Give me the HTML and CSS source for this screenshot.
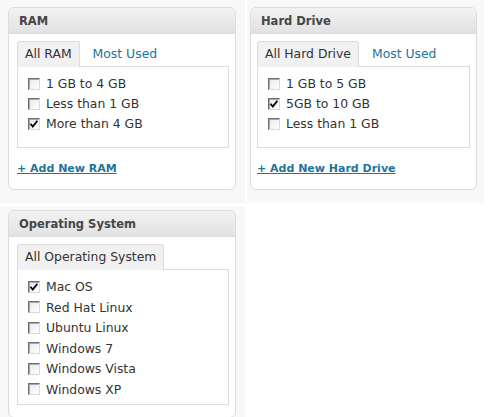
FILE: index.html
```html
<!DOCTYPE html>
<html>
<head>
<meta charset="utf-8">
<link rel="stylesheet" href="styles.css">
</head>
<body>
<div class="grid">
  <div class="cell cell-a">
    <div class="postbox">
      <h3 class="hndle">RAM</h3>
      <div class="inside">
        <ul class="tabs">
          <li class="tab active">All RAM</li>
          <li class="tab"><a href="#">Most Used</a></li>
        </ul>
        <div class="tabbox">
          <ul class="checklist short">
            <li><span class="cb"></span>1 GB to 4 GB</li>
            <li><span class="cb"></span>Less than 1 GB</li>
            <li><span class="cb checked"><svg viewBox="0 0 10 10" width="10" height="10"><path d="M1.5 4.8 L3.8 7.6 L8.4 1.8" fill="none" stroke="#000" stroke-width="1.8"/></svg></span>More than 4 GB</li>
          </ul>
        </div>
        <a class="add" href="#">+ Add New RAM</a>
      </div>
    </div>
  </div>
  <div class="cell cell-b">
    <div class="postbox narrow">
      <h3 class="hndle">Hard Drive</h3>
      <div class="inside">
        <ul class="tabs">
          <li class="tab active">All Hard Drive</li>
          <li class="tab"><a href="#">Most Used</a></li>
        </ul>
        <div class="tabbox">
          <ul class="checklist short">
            <li><span class="cb"></span>1 GB to 5 GB</li>
            <li><span class="cb checked"><svg viewBox="0 0 10 10" width="10" height="10"><path d="M1.5 4.8 L3.8 7.6 L8.4 1.8" fill="none" stroke="#000" stroke-width="1.8"/></svg></span>5GB to 10 GB</li>
            <li><span class="cb"></span>Less than 1 GB</li>
          </ul>
        </div>
        <a class="add" href="#">+ Add New Hard Drive</a>
      </div>
    </div>
  </div>
  <div class="cell cell-c">
    <div class="postbox">
      <h3 class="hndle">Operating System</h3>
      <div class="inside">
        <ul class="tabs">
          <li class="tab active">All Operating System</li>
        </ul>
        <div class="tabbox">
          <ul class="checklist long">
            <li><span class="cb checked"><svg viewBox="0 0 10 10" width="10" height="10"><path d="M1.5 4.8 L3.8 7.6 L8.4 1.8" fill="none" stroke="#000" stroke-width="1.8"/></svg></span>Mac OS</li>
            <li><span class="cb"></span>Red Hat Linux</li>
            <li><span class="cb"></span>Ubuntu Linux</li>
            <li><span class="cb"></span>Windows 7</li>
            <li><span class="cb"></span>Windows Vista</li>
            <li><span class="cb"></span>Windows XP</li>
          </ul>
        </div>
      </div>
    </div>
  </div>
</div>
</body>
</html>
```
FILE: styles.css
```css
html, body {
  margin: 0;
  padding: 0;
  background: #fff;
  font-family: "DejaVu Sans", Verdana, sans-serif;
  color: #333;
}

.grid {
  display: grid;
  grid-template-columns: 245px 237px;
  grid-template-rows: 203px 240px;
  gap: 3px 2px;
  height: 417px;
  overflow: hidden;
}

.cell {
  background: #f8f8f8;
  box-sizing: border-box;
}

.cell-a { padding: 7px 0 0 8px; }
.cell-b { padding: 7px 0 0 3px; }
.cell-c { padding: 4px 0 0 8px; }

.postbox {
  width: 228px;
  box-sizing: border-box;
  background: #fff;
  border: 1px solid #dcdcdc;
  border-radius: 6px;
}

.postbox.narrow { width: 227px; }

.hndle {
  margin: 0;
  height: 25px;
  line-height: 26px;
  padding: 0 10px;
  font-size: 11.5px;
  font-weight: bold;
  color: #464646;
  background: linear-gradient(to bottom, #f2f2f2, #e2e2e2);
  border-bottom: 1px solid #dcdcdc;
  border-radius: 5px 5px 0 0;
}

.inside {
  padding: 7px 6px 12px 8px;
}

.cell-b .inside { padding-left: 6px; }

.tabs {
  list-style: none;
  margin: 0;
  padding: 0;
  display: flex;
  height: 25px;
  font-size: 12.4px;
}

.tab {
  padding: 0 12px 0 8px;
  line-height: 26px;
  height: 25px;
}

.tab a {
  color: #21759b;
  text-decoration: none;
}

.tab.active {
  position: relative;
  z-index: 1;
  box-sizing: border-box;
  height: 26px;
  line-height: 24px;
  border: 1px solid #dcdcdc;
  border-bottom: none;
  border-radius: 3px 3px 0 0;
  background: #f1f1f1;
  padding: 0 7px;
  margin-right: 5px;
  color: #333;
}

.tabbox {
  border: 1px solid #dcdcdc;
  background: #fff;
}

.checklist {
  list-style: none;
  margin: 0;
  padding: 7px 8px 7px 10px;
  font-size: 12.4px;
  color: #333;
}

.checklist.short { min-height: 66px; }

.checklist.long { padding-bottom: 4px; }

.checklist li {
  line-height: 20px;
  height: 20px;
  white-space: nowrap;
}

.checklist.long li {
  height: 20.5px;
  line-height: 20.5px;
}

.cb {
  display: inline-block;
  vertical-align: middle;
  width: 12px;
  height: 12px;
  box-sizing: border-box;
  margin: -2px 6px 0 0;
  border: 1px solid;
  border-color: #6e6e6e #dadada #dadada #6e6e6e;
  box-shadow: inset 1px 1px 0 #a8a8a8;
  background: linear-gradient(135deg, #e8e8e8, #fff);
  position: relative;
}

.cb svg {
  position: absolute;
  left: 0;
  top: 0;
}

.add {
  display: block;
  margin-top: 13px;
  line-height: 16px;
  font-size: 11px;
  font-weight: bold;
  color: #21759b;
  text-decoration: underline;
}
```
